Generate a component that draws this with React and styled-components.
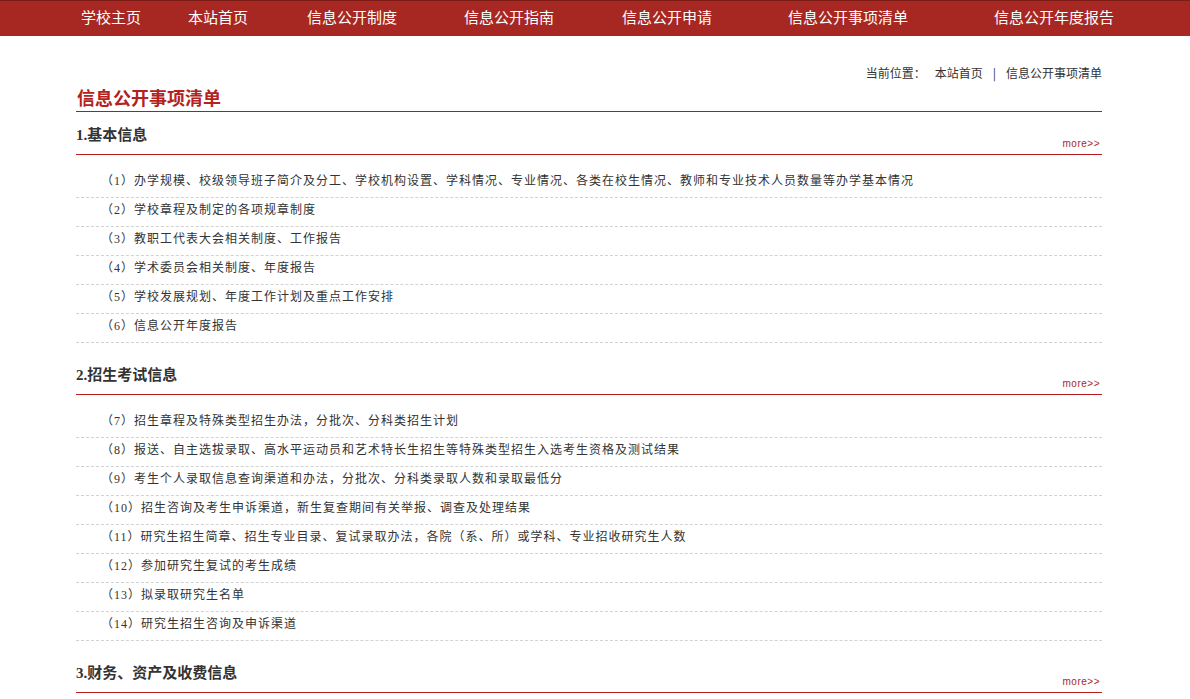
import React from 'react'
import styled, { createGlobalStyle } from 'styled-components'

const GlobalStyle = createGlobalStyle`
  html, body {
    margin: 0;
    padding: 0;
    background: #fff;
    font-family: "Noto Sans CJK SC", "Liberation Sans", sans-serif;
    color: #333;
  }
  ul { margin: 0; padding: 0; list-style: none; }
`

const NavBar = styled.div`
  height: 32px;
  padding-bottom: 3px;
  background: #a72822;
  border-top: 1px solid #7d1b16;
  display: grid;
  grid-template-columns: 107px 119px 157px 158px 166px 206px auto;
  align-items: center;
  padding-left: 81px;
`

const NavItem = styled.a`
  color: #fff;
  font-size: 15px;
  line-height: 20px;
  text-decoration: none;
  white-space: nowrap;
`

const Main = styled.div`
  width: 1026px;
  margin: 0 0 0 76px;
  padding-top: 28px;
`

const Crumbs = styled.div`
  text-align: right;
  font-size: 12px;
  line-height: 18px;
  color: #333;
  span { margin: 0 10px; }
  b { font-weight: normal; margin-right: 9px; }
`

const PageTitle = styled.h2`
  margin: 3px 0 0;
  font-size: 18px;
  font-weight: bold;
  line-height: 24px;
  color: #b3221d;
  padding: 0 0 2px 1px;
  border-bottom: 1px solid #cc1010;
`

const Section = styled.div`
  margin-top: ${p => (p.$first ? '0' : '9px')};
`

const SectionHead = styled.div`
  height: 42px;
  display: flex;
  justify-content: space-between;
  align-items: flex-end;
  border-bottom: 1px solid #b81c1c;
`

const SectionTitle = styled.h3`
  margin: 0 0 9px;
  font-family: "Liberation Serif", "Noto Sans CJK SC", serif;
  font-size: 15px;
  font-weight: bold;
  line-height: 20px;
  color: #333;
`

const More = styled.a`
  font-family: "Liberation Sans", sans-serif;
  font-size: 10px;
  line-height: 14px;
  margin: 0 2px 3px 0;
  color: #a8282a;
  text-decoration: none;
  letter-spacing: 0.5px;
`

const List = styled.ul`
  padding-top: 14px;
`

const Row = styled.li`
  height: 28px;
  line-height: 25px;
  font-family: "Liberation Serif", "Noto Sans CJK SC", serif;
  font-size: 12px;
  letter-spacing: 1px;
  color: #333;
  padding-left: 25px;
  white-space: nowrap;
  border-bottom: 1px dashed #d2d2d2;
`

const sections = [
  {
    title: '1.基本信息',
    items: [
      '（1）办学规模、校级领导班子简介及分工、学校机构设置、学科情况、专业情况、各类在校生情况、教师和专业技术人员数量等办学基本情况',
      '（2）学校章程及制定的各项规章制度',
      '（3）教职工代表大会相关制度、工作报告',
      '（4）学术委员会相关制度、年度报告',
      '（5）学校发展规划、年度工作计划及重点工作安排',
      '（6）信息公开年度报告',
    ],
  },
  {
    title: '2.招生考试信息',
    items: [
      '（7）招生章程及特殊类型招生办法，分批次、分科类招生计划',
      '（8）报送、自主选拔录取、高水平运动员和艺术特长生招生等特殊类型招生入选考生资格及测试结果',
      '（9）考生个人录取信息查询渠道和办法，分批次、分科类录取人数和录取最低分',
      '（10）招生咨询及考生申诉渠道，新生复查期间有关举报、调查及处理结果',
      '（11）研究生招生简章、招生专业目录、复试录取办法，各院（系、所）或学科、专业招收研究生人数',
      '（12）参加研究生复试的考生成绩',
      '（13）拟录取研究生名单',
      '（14）研究生招生咨询及申诉渠道',
    ],
  },
  {
    title: '3.财务、资产及收费信息',
    items: [],
  },
]

const navLinks = ['学校主页', '本站首页', '信息公开制度', '信息公开指南', '信息公开申请', '信息公开事项清单', '信息公开年度报告']

const App = () => {
  return (
    <>
      <GlobalStyle />
      <NavBar>
        {navLinks.map(n => (
          <NavItem key={n} href="#">{n}</NavItem>
        ))}
      </NavBar>
      <Main>
        <Crumbs>
          <b>当前位置：</b>本站首页<span>|</span>信息公开事项清单
        </Crumbs>
        <PageTitle>信息公开事项清单</PageTitle>
        {sections.map((s, i) => (
          <Section key={s.title} $first={i === 0}>
            <SectionHead>
              <SectionTitle>{s.title}</SectionTitle>
              <More href="#">more&gt;&gt;</More>
            </SectionHead>
            {s.items.length > 0 && (
              <List>
                {s.items.map(t => (
                  <Row key={t}>{t}</Row>
                ))}
              </List>
            )}
          </Section>
        ))}
      </Main>
    </>
  )
}

export default App
